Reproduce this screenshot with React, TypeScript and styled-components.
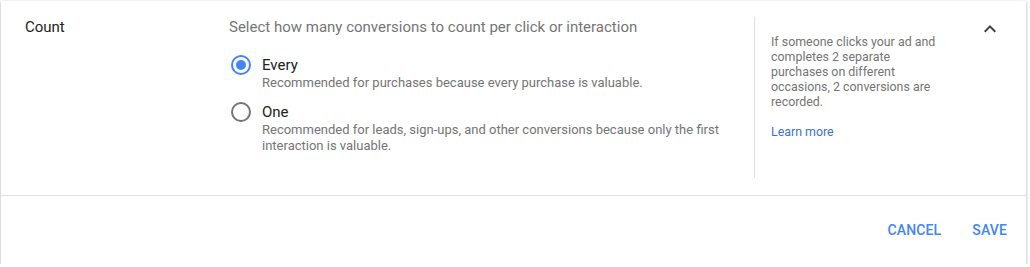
import React, { useState } from 'react';
import styled, { createGlobalStyle } from 'styled-components';

const GlobalStyle = createGlobalStyle`
  html, body {
    margin: 0;
    padding: 0;
    background: #fff;
  }
  body {
    font-family: Roboto, "Liberation Sans", Arial, sans-serif;
    -webkit-font-smoothing: antialiased;
  }
`;

const Card = styled.div`
  width: 1025px;
  margin: 1px 0 0 1px;
  background: #fff;
  box-shadow: 0 1px 3px rgba(0, 0, 0, 0.3), 0 1px 1px rgba(0, 0, 0, 0.14);
`;

const Body = styled.div`
  display: grid;
  grid-template-columns: 228px 525px 196px 28px 24px;
  padding: 16px 24px 17px 0;
  border-bottom: 1px solid #e0e0e0;
`;

const SectionLabel = styled.div`
  padding-left: 24px;
  font-size: 15px;
  line-height: 20px;
  color: #212121;
`;

const Main = styled.div`
  display: flex;
  flex-direction: column;
`;

const Title = styled.div`
  font-size: 15px;
  line-height: 20px;
  color: #757575;
  margin-bottom: 18px;
`;

const OptionList = styled.div`
  display: flex;
  flex-direction: column;
  gap: 11px;
`;

const Option = styled.label`
  display: grid;
  grid-template-columns: 24px 1fr;
  column-gap: 9px;
  cursor: pointer;
`;

const RadioWrap = styled.span`
  display: flex;
  align-items: center;
  justify-content: center;
  height: 20px;
`;

const RadioCircle = styled.span<{ $checked: boolean }>`
  box-sizing: border-box;
  width: 20px;
  height: 20px;
  border-radius: 50%;
  border: 2px solid ${({ $checked }) => ($checked ? '#4285f4' : '#757575')};
  display: flex;
  align-items: center;
  justify-content: center;

  &::after {
    content: '';
    width: 10px;
    height: 10px;
    border-radius: 50%;
    background: #4285f4;
    transform: scale(${({ $checked }) => ($checked ? 1 : 0)});
  }
`;

const OptionTitle = styled.span`
  font-size: 15px;
  line-height: 20px;
  color: #212121;
`;

const OptionDesc = styled.span`
  grid-column: 2;
  font-size: 13px;
  line-height: 16px;
  color: #757575;
  max-width: 480px;
`;

const Help = styled.aside`
  border-left: 1px solid #e0e0e0;
  padding: 17px 0 0 16px;
  min-height: 144px;
  font-size: 12.4px;
  line-height: 15px;
  color: #757575;
`;

const HelpText = styled.p`
  margin: 0 0 15px;
  width: 176px;
`;

const HelpLink = styled.a`
  color: #3f6fd8;
  text-decoration: none;
`;

const Toggle = styled.button`
  grid-column: 5;
  width: 24px;
  height: 24px;
  padding: 0;
  border: 0;
  background: none;
  cursor: pointer;
  color: #424242;
`;

const Footer = styled.div`
  display: flex;
  justify-content: flex-end;
  gap: 15px;
  padding: 16px 11px 16px 0;
`;

const TextButton = styled.button`
  height: 36px;
  padding: 0 8px;
  border: 0;
  background: none;
  font-family: inherit;
  font-size: 14px;
  font-weight: 500;
  letter-spacing: 0.01em;
  text-transform: uppercase;
  color: #4285f4;
  cursor: pointer;
`;

const options = [
  {
    id: 'every',
    title: 'Every',
    desc: 'Recommended for purchases because every purchase is valuable.',
  },
  {
    id: 'one',
    title: 'One',
    desc: 'Recommended for leads, sign-ups, and other conversions because only the first interaction is valuable.',
  },
];

const App = () => {
  const [value, setValue] = useState('every');

  return (
    <>
      <GlobalStyle />
      <Card>
        <Body>
          <SectionLabel>Count</SectionLabel>
          <Main>
            <Title>Select how many conversions to count per click or interaction</Title>
            <OptionList>
              {options.map((o) => (
                <Option key={o.id} onClick={() => setValue(o.id)}>
                  <RadioWrap>
                    <RadioCircle $checked={value === o.id} />
                  </RadioWrap>
                  <OptionTitle>{o.title}</OptionTitle>
                  <OptionDesc>{o.desc}</OptionDesc>
                </Option>
              ))}
            </OptionList>
          </Main>
          <Help>
            <HelpText>
              If someone clicks your ad and completes 2 separate purchases on different
              occasions, 2 conversions are recorded.
            </HelpText>
            <HelpLink href="#">Learn more</HelpLink>
          </Help>
          <Toggle aria-label="Collapse">
            <svg width="24" height="24" viewBox="0 0 24 24" fill="currentColor">
              <path d="M12 8l-6 6 1.41 1.41L12 10.83l4.59 4.58L18 14z" />
            </svg>
          </Toggle>
        </Body>
        <Footer>
          <TextButton>Cancel</TextButton>
          <TextButton>Save</TextButton>
        </Footer>
      </Card>
    </>
  );
};

export default App;
